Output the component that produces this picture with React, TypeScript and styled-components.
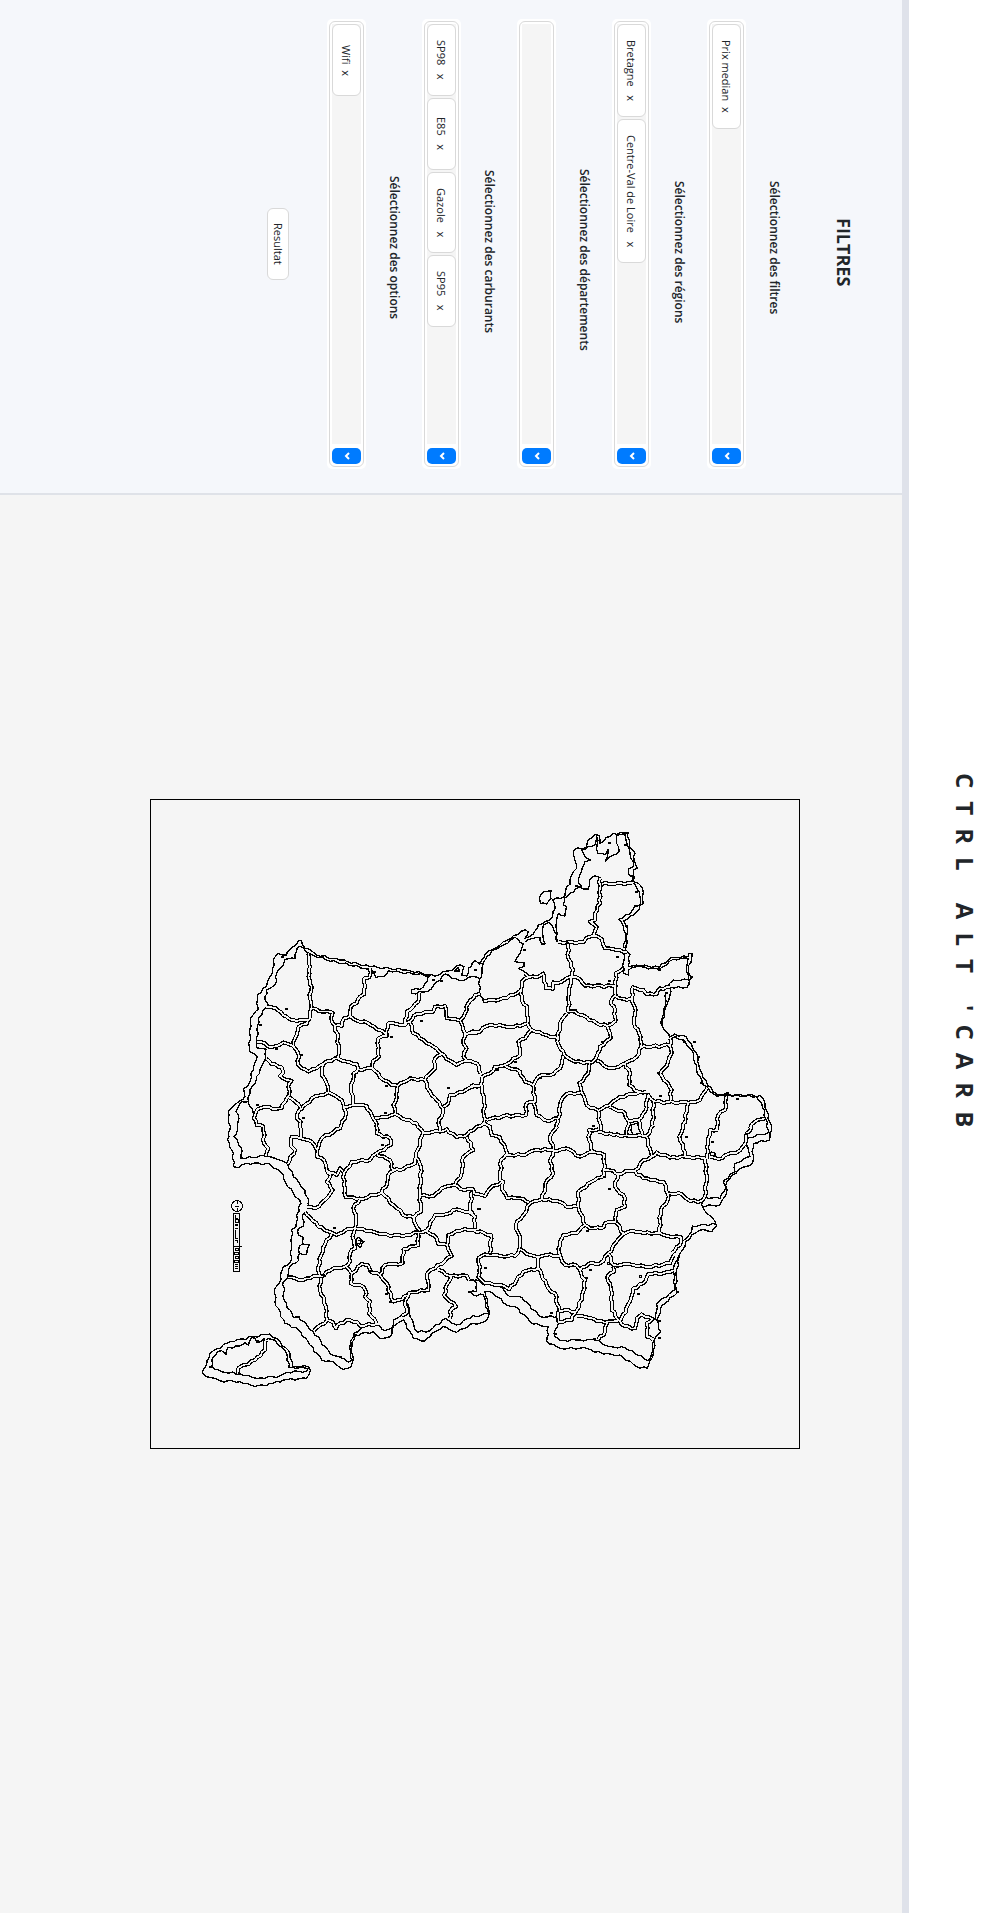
import React from 'react';
import styled, { createGlobalStyle } from 'styled-components';

const GlobalStyle = createGlobalStyle`
  html, body { margin: 0; padding: 0; }
  *, *::before, *::after { box-sizing: border-box; }
  body { background: #f5f5f5; }
`;

const Page = styled.div`
  writing-mode: vertical-rl;
  display: flex;
  flex-direction: column;
  width: 100%;
  height: 100vh;
  overflow: hidden;
  color: #212529;
  font-family: 'Open Sans', 'Noto Sans', sans-serif;
  background: #f5f5f5;
`;

const Header = styled.header`
  flex: none;
  padding-block: 23px 40px;
  border-block-end: 7px solid #dfe2ea;
  background: #fff;
  text-align: center;
`;

const Brand = styled.h1`
  margin: 0;
  font-size: 24px;
  line-height: 33px;
  font-weight: 700;
  letter-spacing: 13px;
`;

const Body = styled.div`
  flex: 1;
  min-block-size: 0;
  display: flex;
`;

const Sidebar = styled.aside`
  flex: none;
  inline-size: 495px;
  padding-block-start: 46px;
  padding-inline: 19px 24px;
  border-inline-end: 2px solid #dfe2e8;
  background: #f5f7fb;
`;

const SidebarTitle = styled.h2`
  margin: 0;
  margin-block-end: 50px;
  padding-inline-start: 16px;
  font-size: 18px;
  line-height: 24px;
  text-align: center;
`;

const Field = styled.section`
  margin-block-end: 20px;
`;

const FieldTitle = styled.h3<{ $lead: number }>`
  margin: 0;
  margin-block-end: 20px;
  padding-inline-start: ${({ $lead }) => $lead}px;
  font-size: 12px;
  line-height: 16px;
  font-weight: 600;
  text-align: center;
`;

const Shell = styled.div`
  padding: 2px;
  border-radius: 5px;
  background: #fff;
`;

const Picker = styled.div`
  display: flex;
  gap: 4px;
  block-size: 35px;
  padding: 2px;
  border: 1px solid #d9d9d9;
  border-radius: 6px;
`;

const Chips = styled.div`
  flex: 1;
  display: flex;
  gap: 2px;
  background: #f5f5f5;
`;

const Chip = styled.button`
  writing-mode: vertical-rl;
  min-inline-size: 72px;
  margin: 0;
  padding-block: 0;
  padding-inline: 15px;
  border: 1px solid #d9d9d9;
  border-radius: 6px;
  background: #fff;
  color: inherit;
  font: inherit;
  font-size: 11px;
  line-height: 15px;
  white-space: pre;
`;

const Toggle = styled.button`
  writing-mode: vertical-rl;
  display: flex;
  align-items: center;
  justify-content: center;
  inline-size: 16px;
  padding: 0;
  border: 0;
  border-radius: 5px;
  background: #007bff;
`;

const Submit = styled(Chip)`
  display: block;
  block-size: 22px;
  margin-block-start: 38px;
  margin-inline: auto;
  padding-inline: 13px;
`;

const Main = styled.main`
  flex: 1;
  padding-block-start: 102px;
  padding-inline-end: 160px;
`;

const MapCanvas = styled.svg`
  display: block;
  width: 650px;
  height: 650px;
  margin-inline: auto;
  border: 1px solid #000;
  shape-rendering: crispEdges;
`;

type Sheet = { dx: number; dy: number; borders: string[]; coast: string[]; dots: string };

const sheets: Sheet[] = [
  {
    dx: -33,
    dy: -30,
    borders: [
      '505,490 510,530 505,560 515,590 508,615 514,655 510,685',
      '510,687 490,690 460,690 440,680 415,662 395,652 380,650',
      '514,655 550,665 578,668 575,695 585,708 605,708 612,685 630,678',
      '690,535 688,562 673,565 673,612 660,620 650,640 632,650 630,678',
      '630,678 650,692 685,700 710,718 725,722 740,738 715,745 712,760 717,800 700,812 697,835',
      '585,708 593,745 597,780 593,805',
      '510,685 500,702 475,712 465,745 460,768 475,790 475,825 505,845 530,835 550,822 585,805 593,805 620,815 650,822 655,838 697,835',
      '352,757 375,760 390,772 410,768 430,757 445,762 460,768',
      '378,805 395,822 425,832 430,848 420,858 440,870 455,872 445,890 448,915 440,925 425,955 400,958 375,950 352,958 345,975 342,985 350,1005 370,1010 372,1060 385,1075 378,1098',
      '440,920 465,935 483,955 475,965 470,985 482,995 482,1045 455,1040 453,1068 465,1080 443,1122',
      '483,960 515,925 565,907 590,920 605,930 612,955 617,975 600,1015 545,1045 532,1080',
      '550,822 545,855 560,880 565,907',
      '655,838 640,850 640,870 632,895 640,920 640,945 615,952',
      '640,945 680,948 695,975 710,1000 710,1030 750,1045',
      '697,835 715,850 730,870 755,885 773,888 795,875 810,865 855,870 865,855 885,835 885,805 903,795',
      '773,888 770,925 760,945 766,972 740,982 705,985',
      '766,972 800,990 830,1000 850,1028',
      '838,610 835,635 820,650 800,665 795,705 745,700 740,735',
      '795,705 810,695 830,672 880,665 885,650 915,648 920,685 960,692',
      '810,698 820,730 850,750 880,770 903,790 930,812 950,825 980,812',
      '960,692 970,720 975,740 970,760 980,775 970,800 980,812 1010,820 1022,850',
      '960,690 975,670 985,640 1005,615 1020,612',
      '975,735 1000,728 1020,727',
      '855,870 870,905 890,930 908,955 905,980 895,1000 900,1025',
      '908,950 925,940 930,915 970,905 1000,890 1020,888',
    ],
    coast: [
      '475,452 485,452 487,465 530,495 600,510 690,530 800,540 885,558 910,545 935,542 960,525 972,530 965,555 980,558 985,535 1005,512 1017,520',
      '475,452 470,462 450,478 440,495 415,490 402,505 403,525 390,560 380,588 352,615 350,640 355,657 332,685 328,785 352,800 340,840 325,885 310,895 315,920 290,940 265,965 265,985 270,1020',
      '478,468 470,485 465,505 435,508 430,525 410,550 405,585 380,600 375,630 385,645',
      '478,468 510,492 560,510 685,537 700,545 708,562 730,560 745,542 830,553 870,557 862,575 840,598 815,600 815,610 862,605 900,570 915,552 935,565 965,572 1000,560 1020,568',
      '378,652 355,685 350,755 350,773 378,777 378,805 360,840 345,880 330,900 325,935 340,970',
      '325,935 305,935 288,965 297,985 292,1020',
      '942,543 955,533 958,543 942,543',
    ],
    dots: '440,657 362,705 485,795 490,983 845,692 926,894 735,970 428,500 740,887 755,740 410,778 352,945 904,572 880,569 1006,540 704,545',
  },
  {
    dx: 957,
    dy: -30,
    borders: [
      '395,282 440,280 485,280',
      '390,265 388,310 390,340 375,370 375,390 360,395 380,412 372,437',
      '265,455 293,457 340,457 350,443 372,437 395,447 405,475 440,480 470,485',
      '293,457 295,505 310,540 305,560 260,580 250,577 248,597 228,595 220,550 200,562 175,562 165,550',
      '175,562 155,575 153,600 130,615 90,628 42,634',
      '305,560 330,568 345,587 437,588 437,550 460,535',
      '303,563 297,610 295,665 315,665 350,682 380,700 412,708 437,692 432,650 422,635 437,615 437,588',
      '437,618 470,630 485,625 488,592 520,600 530,613 560,612 570,595 600,592',
      '485,625 497,660 492,700 512,740 512,772 545,770 600,765',
      '412,708 422,745 390,770 380,800 365,818 315,815 283,795 262,755 270,700 290,670',
      '153,600 155,630 172,650 172,700 185,720 230,735 262,745',
      '172,700 130,712 90,705 50,708 30,725 0,728',
      '185,720 165,745 145,755 150,795 105,825 75,830 60,850 35,862',
      '105,828 150,845 165,875 190,885 205,860 250,852 270,835 280,797',
      '190,885 195,935 170,940 168,975 100,978 50,990',
      '35,862 32,885 0,890',
      '35,885 42,935 42,1000',
      '190,940 200,975 235,993 265,985 272,935 290,912 335,907 328,880 355,850 360,820',
      '380,812 410,832 435,833 465,820 500,800 512,772',
      '465,820 480,850 478,885 505,905 530,905',
      '505,908 450,920 420,945 385,962 350,945 335,907',
      '420,950 465,970 475,992 505,990 525,965 535,915 555,935 655,938',
      '600,745 605,790 590,828 570,850 605,900 600,935',
      '655,938 690,930 712,895',
      '770,918 765,960 745,975 740,1020',
      '655,940 645,975 645,1000',
      '550,935 548,1010',
      '385,962 392,1020',
      '262,985 260,1015',
      '885,985 855,995 840,1015',
      '475,992 470,1035',
      '505,990 518,1035',
    ],
    coast: [
      '28,522 45,492 90,465 130,437 165,420 175,425 165,445 190,432 205,405 225,395 240,390 255,355 248,330 285,318 290,290 300,283 305,255 320,235 312,200 312,180 350,172 355,150 375,133 387,137 390,160 430,130 472,130 478,165 495,190 492,210 502,235 490,240 490,275 505,280 517,295 520,340 490,375 460,392 473,420 467,480 480,492 475,530 500,525 568,532 605,502 655,500 655,490 667,490 665,505 655,540 665,562 650,593 600,592 600,615 592,640 577,690 582,720 600,740 615,732 650,742 680,790 690,840 712,885 740,912 870,917 885,940 905,1020',
      '28,522 40,520 65,482 100,465 135,442 160,462 150,490 135,515 162,518 162,530 145,535 168,550',
      '40,520 35,560 28,570 28,605 40,638',
      '165,455 190,445 210,443 215,462 225,462 218,430 220,405 235,397 250,415 265,455',
      '260,455 258,410 265,370 285,378 290,350 280,345 283,325 300,310 330,292 355,297 358,270 375,258 390,262 395,280',
      '320,290 335,290 325,270 335,245 345,215 362,210 350,205 335,180 375,165 380,140 383,190 405,193 415,178 407,213 430,195 448,185 440,160 440,137 467,135 472,165 480,190 490,230 475,238 477,255 490,262 485,280',
      '490,280 500,295 510,320 510,345 495,350 480,372 445,388 460,410 467,430 462,475',
      '240,302 222,305 208,325 212,340 230,342 243,325 243,302 237,302',
      '462,490 460,550 475,555 475,540 500,530 568,538 610,508 655,505 650,545 655,570 610,570 590,592',
      '590,605 582,670 573,700 600,745',
      '605,745 615,740 640,750 665,780 680,840 700,885 740,918 765,915 860,920 875,940 895,1020',
      '485,1005 500,1000 515,1015 510,1035 490,1035 483,1020 485,1005',
    ],
    dots: '418,572 442,500 317,660 397,755 137,815 82,840 210,865 673,755 643,755 685,800 695,878 772,910 803,928 570,918 370,1008 568,540 665,560 615,742 588,608 483,257 500,305 495,348 473,130 417,158 465,165 320,288 470,408 15,540 163,480 293,458 418,698 565,850',
  },
  {
    dx: -33,
    dy: 960,
    borders: [
      '482,55 515,65 530,90',
      '532,90 530,110 552,120 560,150 590,165 600,145 610,155',
      '560,150 572,165 560,185 578,210 555,240 525,265 500,262',
      '750,55 752,75 710,100 690,120 635,125 612,160 612,195 618,232 660,235',
      '710,103 750,120 760,152 745,165 742,190 725,218 660,238 640,265 648,295 645,325',
      '760,152 790,147 825,130 828,110 845,50 850,38',
      '850,38 900,35 920,28 950,52 980,45 1010,20 1032,10',
      '980,50 1000,90 970,110 965,160 945,195 905,205 880,228 840,228',
      '828,112 843,140 840,228 843,275 822,292',
      '725,218 770,265 800,290 822,292 825,310 840,332',
      '495,275 510,292 535,320 575,338 590,345 620,328 645,325 700,335 750,348 800,345 858,332',
      '575,340 548,385 535,440 540,470',
      '645,325 637,350 645,385 630,400 630,425 615,440 580,445 560,455 545,470 520,468 490,480 445,472',
      '543,475 540,510 558,560 562,600 522,632',
      '562,600 580,608 588,625 600,610 630,600 650,605 662,618 710,612',
      '618,440 635,460 632,490 670,500 680,520 675,530 690,545 687,580 710,610',
      '635,460 665,432 683,435 690,452 720,465 735,435 788,430 790,388 835,375 835,340',
      '722,468 740,490 752,520 760,545 775,540 803,525',
      '860,332 885,285 920,282 950,268 985,275 1005,290 1005,325',
      '862,335 890,355 895,372 922,375 925,345 950,332 1010,328',
      '922,375 935,408 885,445 862,460 865,510 808,518 797,540 800,580 785,587',
      '895,450 930,468 980,467 987,480',
      '935,470 920,495 912,525 948,560 930,575 930,595',
      '945,195 960,207 1000,208 1010,225',
      '995,215 990,270 1000,285',
      '378,660 375,690 345,720 295,745 292,762',
    ],
    coast: [
      '270,30 262,60 280,100 280,140 295,143 320,130 390,132 430,165 438,190 483,250 470,285 468,320 455,330 455,375 452,425 430,440 417,490 405,505 405,545 435,610 475,628 510,675 545,720 580,725 610,748 632,742 640,715 632,690 645,645 700,635 720,655 750,650 760,620 790,600 820,655 855,663 875,640 910,620 950,637 1000,610 1020,610',
      '292,30 282,50 305,85 305,115 375,108 410,117 443,132 460,170 495,210 510,262',
      '490,280 490,318 475,325 475,345 490,352 488,372 478,378 478,400 500,403 508,375 488,372',
      '478,400 475,422 450,440 443,470 430,485 432,540 460,592 475,590 520,635 570,700 600,712 625,727 635,720 628,685 640,640 665,625',
      '665,618 710,615 735,632 755,625 760,600 785,585',
      '803,550 810,590 832,637 870,632 915,595 950,615 1000,587 1020,588',
      '187,755 200,735 210,700 270,665 340,650 390,642 420,665 450,700 458,738 505,740 512,750 500,775 430,780 400,790 345,800 300,785 240,782 200,770 187,755',
      '215,740 220,710 232,695 245,692 258,704 265,682 300,678 315,668 325,675 335,652 345,655 352,668 372,655 370,665 385,655 405,660 440,700 447,742 505,745 500,753 440,757 420,768 350,775 300,762 245,755 215,740',
      '655,350 672,365 662,383 648,372 655,350',
      '655,362 665,362 660,372 652,370',
      '987,480 1000,478 1010,490 1010,515 990,515',
    ],
    dots: '584,323 728,75 740,521 750,545 475,592 352,663 212,741 988,517 690,452 303,115 600,710 1017,267 550,465',
  },
  {
    dx: 957,
    dy: 960,
    borders: [
      '42,10 60,20 65,45 90,52 112,100 93,120 90,180 100,185 97,210 112,235 150,235 178,248',
      '112,105 155,105 200,90 250,90 240,50 262,20',
      '250,95 240,125 250,160 232,180 215,238 180,250 160,285 137,315 150,360 148,387',
      '215,238 260,243 300,262 325,260 325,215 365,185 403,165 403,105 368,95 330,110 290,85 250,92',
      '368,95 357,60 357,30 385,28',
      '385,35 430,45 475,47 530,47 550,15',
      '403,150 430,152 445,163 480,152 495,152 520,120 545,110 530,50',
      '445,163 435,200 465,235 465,260 440,270 437,305 405,310 395,325 360,325 345,315 325,260',
      '345,315 320,340 280,345 265,385 272,410 240,403 205,412 180,405 148,387',
      '148,387 135,408 90,408 45,403 25,415 30,440 25,470 45,490 90,495 118,508 160,455 205,445 205,412',
      '205,445 235,505 255,520 268,575 285,570 315,575',
      '272,410 285,435 320,437 345,480 335,540 315,580 305,600 265,605 265,575',
      '330,450 355,432 390,430 415,400 440,365 462,342 440,310',
      '462,342 490,332 520,340 568,338 600,350 633,352 630,375 605,400',
      '568,338 572,270 593,240 593,220 635,222 660,243 695,243',
      '495,155 520,175 555,180 580,185 593,220',
      '545,110 560,97 600,113 645,110 705,115',
      '645,110 640,75 628,50 645,5',
      '705,118 710,165 705,230 695,243',
      '710,115 715,70 720,30 742,30',
      '720,110 745,117 775,102 800,98 825,72 830,40 845,20',
      '415,400 430,435 480,433 535,442 600,430 612,405',
      '430,440 432,455 412,470 425,515 425,570 450,605 480,545 490,505 520,490 535,462 580,460 610,450',
      '320,587 350,592 405,608 445,603',
      '412,608 405,635 385,658',
      '450,605 465,618 495,625 500,595 515,583 548,597 530,610 530,650 548,658',
      '97,185 60,205 45,228 10,220 10,208',
      '10,330 63,345 60,400',
    ],
    coast: [
      '30,610 50,600 58,575 45,515 70,520 110,555 135,560 190,612 235,620 230,665 270,685 350,685 400,702 450,705 500,740 532,745 550,700 555,655 572,635 560,600 578,555 620,520 618,460 630,400 665,345 690,330 725,335 740,318 735,305 700,265 695,235',
      '20,610 5,610',
      '30,588 55,580 40,525 10,525 0,515',
      '0,480 20,480 45,497',
      '90,500 120,530 155,532 210,590 265,590',
      '265,610 255,630 255,650 270,662 330,660 375,660 420,680 465,683 535,722 545,700 552,660',
      '558,600 560,550 615,510 610,450 625,405',
      '905,30 898,60 850,70 848,130 805,150 770,185 770,220 750,255 695,258',
      '895,30 895,38 830,55 828,72 840,110 795,130 795,155 762,180 765,210 750,235 705,232',
      '738,312 667,318 665,335 630,375',
      '412,427 418,427 418,433 412,433 412,427',
      '508,466 514,466 514,472 508,472 508,466',
      '722,95 735,100 735,110 722,107 722,95',
    ],
    dots: '418,207 25,267 45,443 352,332 362,450 505,522 245,578 350,473 650,50 568,603 568,653 372,658 255,643 622,517 828,42 728,65 402,170',
  },
];

/* Breaks every long segment into short steps with a small sideways wobble. */
const trace = (points: string): string => {
  const list = points.split(' ').map((p) => p.split(',').map(Number));
  let d = `M${list[0][0]} ${list[0][1]}`;
  for (let i = 1; i < list.length; i += 1) {
    const [ax, ay] = list[i - 1];
    const [bx, by] = list[i];
    const len = Math.hypot(bx - ax, by - ay);
    const steps = Math.max(1, Math.round(len / 12));
    for (let s = 1; s < steps; s += 1) {
      const t = s / steps;
      const w = Math.sin(ax * 1.7 + by * 2.3 + s * 2.1) * 3;
      d += `L${Math.round(ax + (bx - ax) * t - ((by - ay) / len) * w)} ${Math.round(ay + (by - ay) * t + ((bx - ax) / len) * w)}`;
    }
    d += `L${bx} ${by}`;
  }
  return d;
};

const Layer = ({ part, color, width }: { part: 'borders' | 'coast'; color: string; width: number }) => (
  <g fill="none" stroke={color} strokeWidth={width} strokeLinejoin="round">
    {sheets.map((sheet, i) => (
      <path key={i} transform={`translate(${sheet.dx} ${sheet.dy})`} d={sheet[part].map(trace).join('')} />
    ))}
  </g>
);

const FranceMap = () => (
  <MapCanvas viewBox="0 0 1944 1944" role="img" aria-label="Carte des départements">
    <Layer part="borders" color="#000" width={12} />
    <Layer part="coast" color="#000" width={4} />
    <Layer part="borders" color="#f5f5f5" width={5} />
    {sheets.map((sheet, i) => (
      <g key={i} transform={`translate(${sheet.dx} ${sheet.dy})`}>
        {sheet.dots.split(' ').map((dot) => {
          const [x, y] = dot.split(',').map(Number);
          return <rect key={dot} x={x - 4} y={y - 3} width={9} height={6} />;
        })}
      </g>
    ))}
    <g transform="translate(-33 960)" fill="none" stroke="#000" strokeWidth={3}>
      <circle cx={291} cy={258} r={16} />
      <path d="M291 243v9M291 264v9M284 258h14" />
      <path d="M281 281h17v174h-17zM287 285v9h7M287 298h7v8h-7zM284 312h9v5h-9M284 324h9M287 331v24h7M284 362h9v6M281 378h24M287 384h8v7h-8zM284 396h11v6h-11zM287 408h7v8h-7zM284 422h10v5h-10zM284 433h11M284 439h11M284 446h11" />
    </g>
  </MapCanvas>
);

const fields = [
  { title: 'Sélectionnez des filtres', lead: 8, chips: ['Prix median  x'] },
  { title: 'Sélectionnez des régions', lead: 16, chips: ['Bretagne   x', 'Centre-Val de Loire   x'] },
  { title: 'Sélectionnez des départements', lead: 32, chips: [] },
  { title: 'Sélectionnez des carburants', lead: 16, chips: ['SP98   x', 'E85   x', 'Gazole   x', 'SP95   x'] },
  { title: 'Sélectionnez des options', lead: 8, chips: ['Wifi  x'] },
];

export default function App() {
  return (
    <>
      <GlobalStyle />
      <Page lang="fr">
        <Header>
          <Brand>CTRL ALT 'CARB</Brand>
        </Header>
        <Body>
          <Sidebar>
            <SidebarTitle>FILTRES</SidebarTitle>
            {fields.map(({ title, lead, chips }) => (
              <Field key={title}>
                <FieldTitle $lead={lead}>{title}</FieldTitle>
                <Shell>
                  <Picker>
                    <Chips>
                      {chips.map((chip) => (
                        <Chip key={chip} type="button">{chip}</Chip>
                      ))}
                    </Chips>
                    <Toggle type="button" aria-label={title}>
                      <svg width="6" height="8" viewBox="0 0 6 8" fill="none" stroke="#fff" strokeWidth="2">
                        <path d="M5 1L2 4l3 3" />
                      </svg>
                    </Toggle>
                  </Picker>
                </Shell>
              </Field>
            ))}
            <Submit type="button">Resultat</Submit>
          </Sidebar>
          <Main>
            <FranceMap />
          </Main>
        </Body>
      </Page>
    </>
  );
}
